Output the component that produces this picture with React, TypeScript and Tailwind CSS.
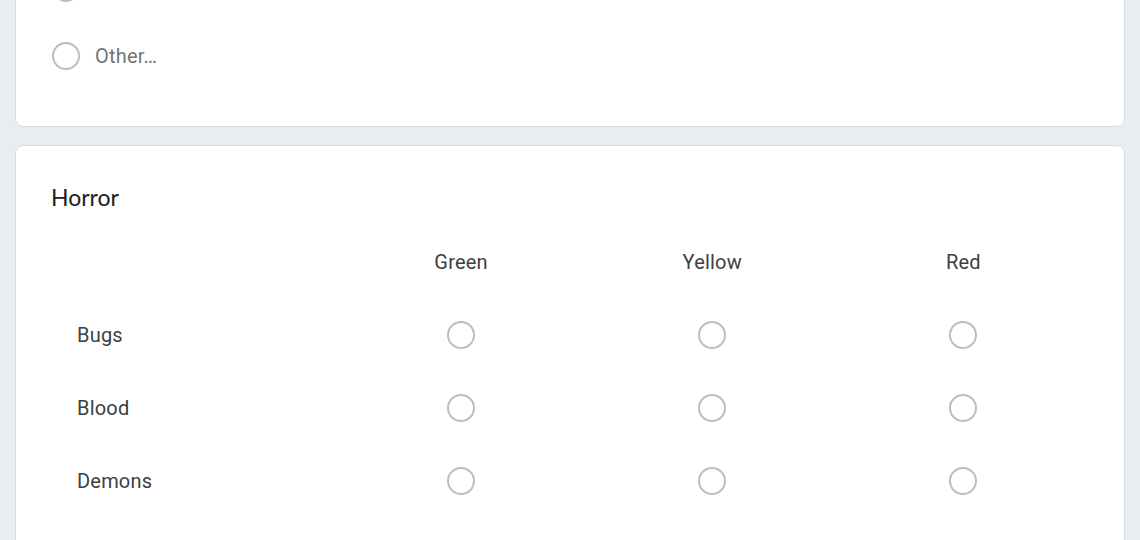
const columns = ["Green", "Yellow", "Red"];
const rows = ["Bugs", "Blood", "Demons", "Ghosts"];

function Radio() {
  return <div className="h-[28px] w-[28px] shrink-0 rounded-full border-[2.5px] border-[#bdbdbd]" />;
}

export default function App() {
  return (
    <div className="h-[540px] w-[1140px] overflow-hidden bg-[#e8edf2] px-[15px] font-['Roboto',sans-serif] tracking-[0.2px]">
      {/* first card, scrolled so only its tail shows */}
      <div className="-mt-[70px] rounded-lg border border-[#dadce0] bg-white px-[36px] pt-[23px] pb-[36px]">
        <div className="flex h-[68px] items-center gap-[15px]">
          <Radio />
          <span className="text-[20px] text-[#70757a]">Option 1</span>
        </div>
        <div className="flex h-[68px] items-center gap-[15px]">
          <Radio />
          <span className="text-[20px] text-[#70757a]">Other…</span>
        </div>
      </div>

      <div className="mt-[18px] rounded-lg border border-[#dadce0] bg-white px-[35px] pt-[35px] pb-6">
        <h2 className="h-[32px] font-['Lato',sans-serif] text-[23px] leading-[32px] tracking-normal text-[#202124]">Horror</h2>
        <div className="mt-3 grid grid-cols-[284.5px_1fr_1fr_1fr]">
          <div className="h-[73px]" />
          {columns.map((c) => (
            <div key={c} className="flex h-[73px] items-center justify-center text-[20px] text-[#3c4043]">
              {c}
            </div>
          ))}
          {rows.map((r) => (
            <div key={r} className="contents">
              <div className="flex h-[73px] items-center pl-[26px] text-[20px] text-[#3c4043]">{r}</div>
              {columns.map((c) => (
                <div key={c} className="flex h-[73px] items-center justify-center">
                  <Radio />
                </div>
              ))}
            </div>
          ))}
        </div>
      </div>
    </div>
  );
}
